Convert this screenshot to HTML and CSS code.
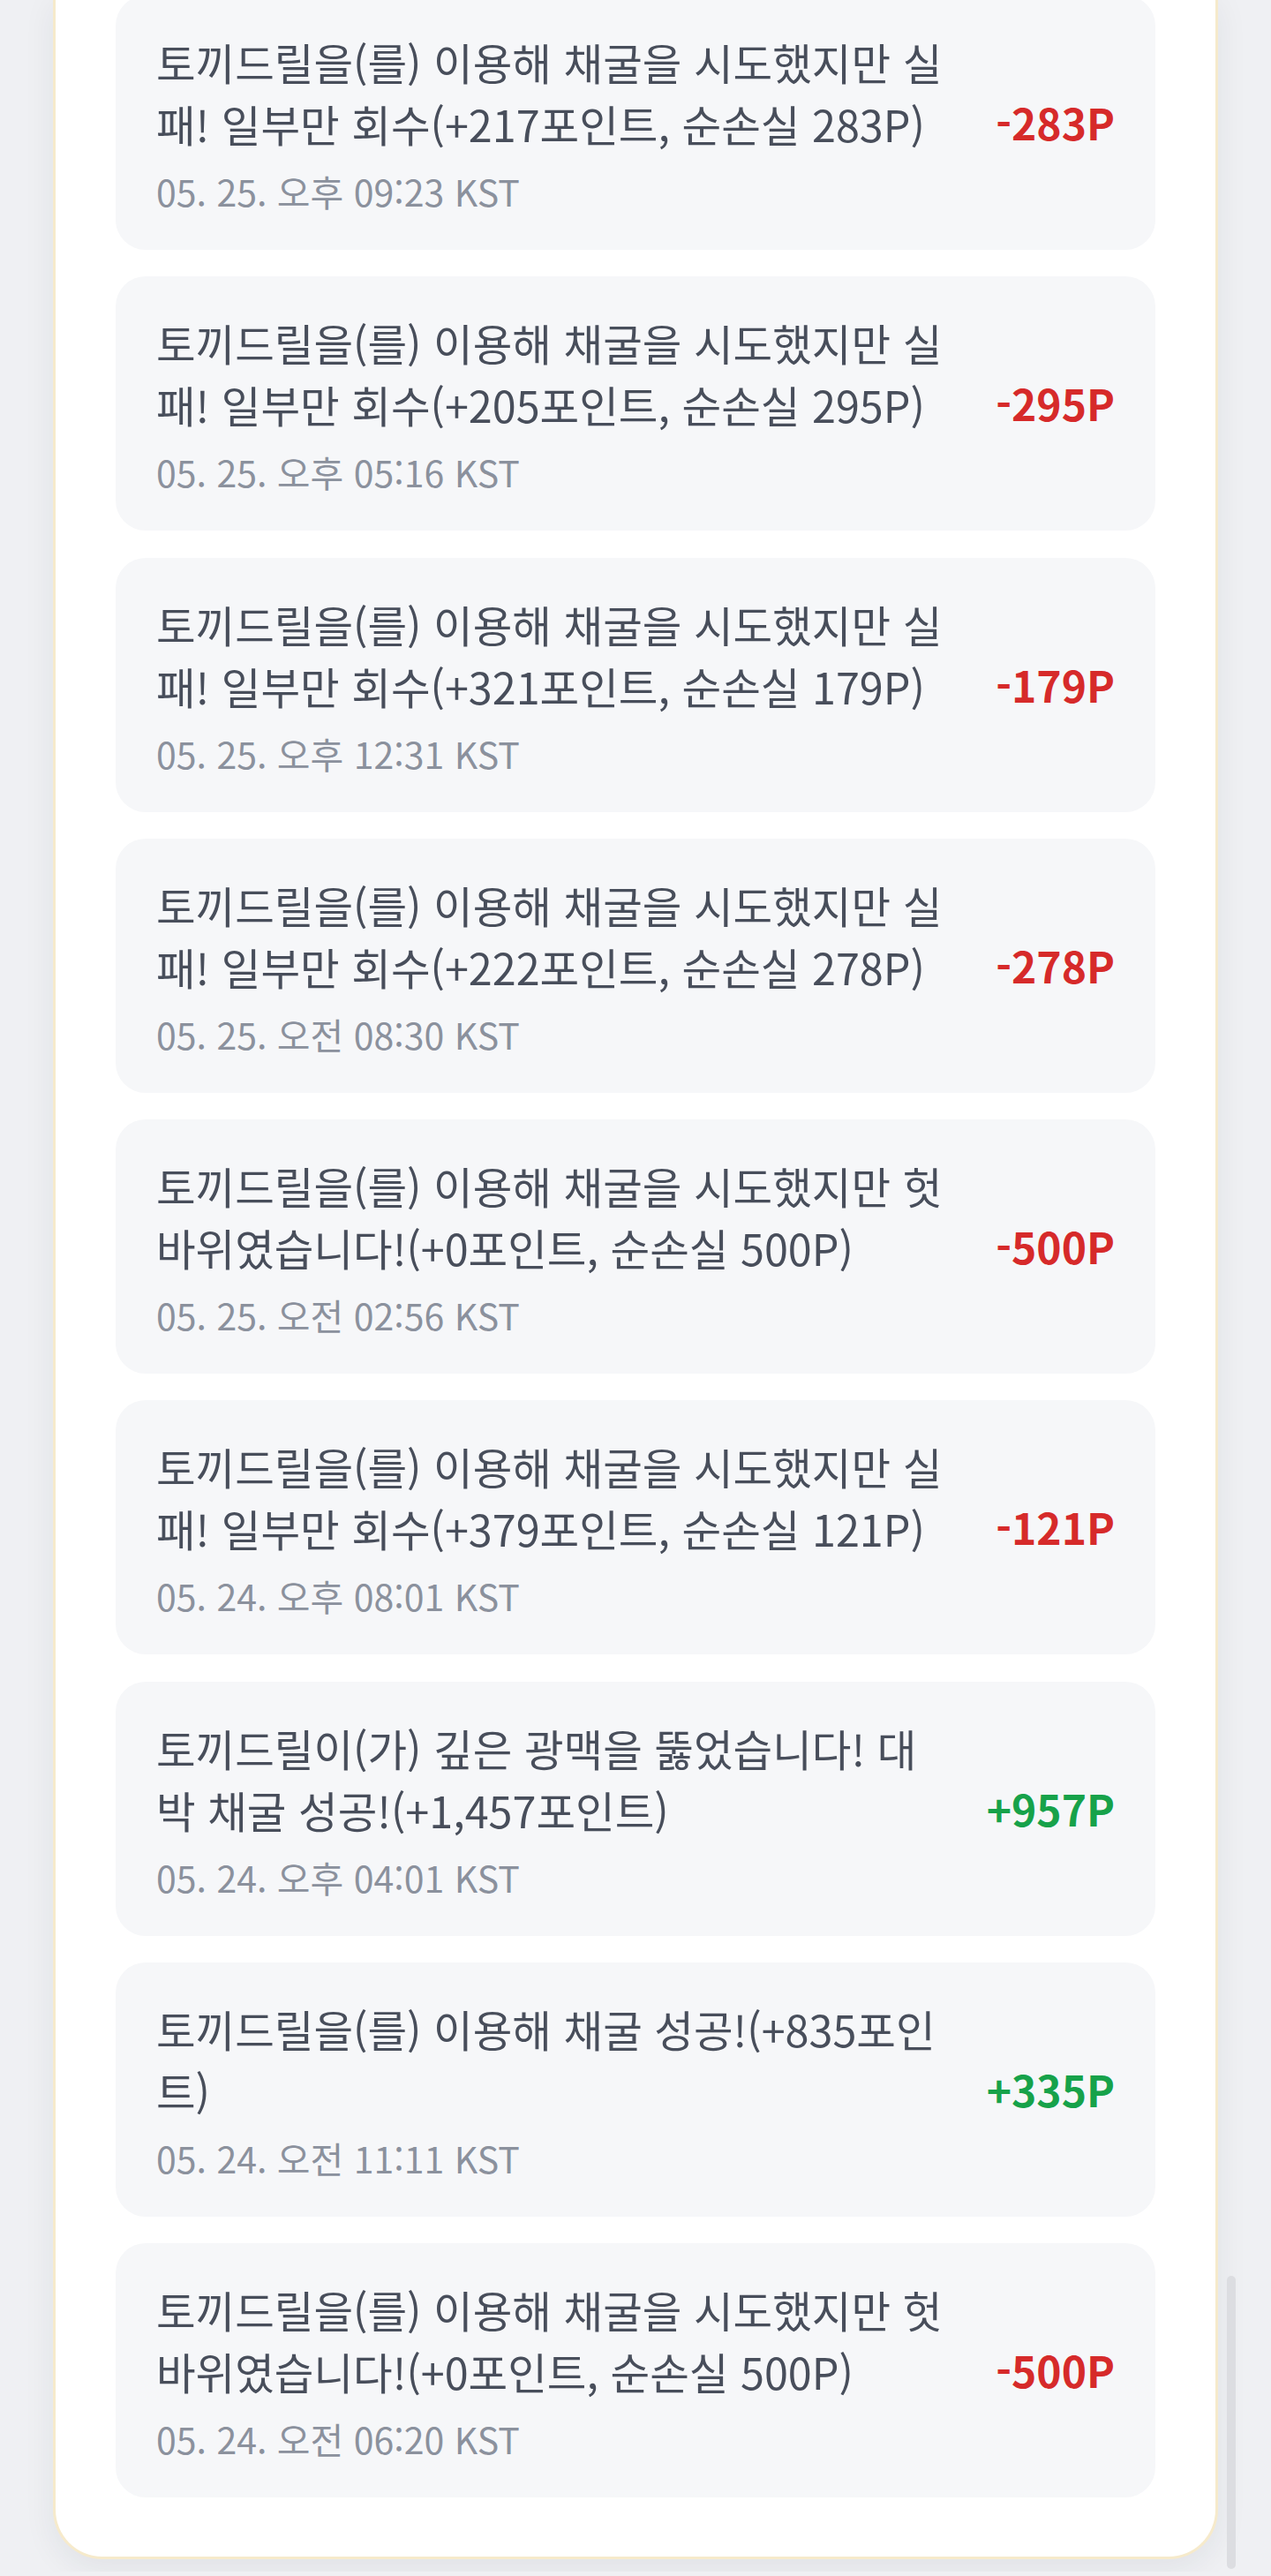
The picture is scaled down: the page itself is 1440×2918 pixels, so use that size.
FILE: index.html
```html
<!DOCTYPE html>
<html lang="ko">
<head>
<meta charset="utf-8">
<title>포인트 내역</title>
<link rel="stylesheet" href="styles.css">
</head>
<body>
<main class="page">
  <section class="panel">
    <ul class="history">
      <li class="entry">
        <div class="entry-body">
          <p class="entry-text">토끼드릴을(를) 이용해 채굴을 시도했지만 실패! 일부만 회수(+217포인트, 순손실 283P)</p>
          <p class="entry-date">05. 25. 오후 09:23 KST</p>
        </div>
        <span class="amount minus">-283P</span>
      </li>
      <li class="entry">
        <div class="entry-body">
          <p class="entry-text">토끼드릴을(를) 이용해 채굴을 시도했지만 실패! 일부만 회수(+205포인트, 순손실 295P)</p>
          <p class="entry-date">05. 25. 오후 05:16 KST</p>
        </div>
        <span class="amount minus">-295P</span>
      </li>
      <li class="entry">
        <div class="entry-body">
          <p class="entry-text">토끼드릴을(를) 이용해 채굴을 시도했지만 실패! 일부만 회수(+321포인트, 순손실 179P)</p>
          <p class="entry-date">05. 25. 오후 12:31 KST</p>
        </div>
        <span class="amount minus">-179P</span>
      </li>
      <li class="entry">
        <div class="entry-body">
          <p class="entry-text">토끼드릴을(를) 이용해 채굴을 시도했지만 실패! 일부만 회수(+222포인트, 순손실 278P)</p>
          <p class="entry-date">05. 25. 오전 08:30 KST</p>
        </div>
        <span class="amount minus">-278P</span>
      </li>
      <li class="entry">
        <div class="entry-body">
          <p class="entry-text">토끼드릴을(를) 이용해 채굴을 시도했지만 헛바위였습니다!(+0포인트, 순손실 500P)</p>
          <p class="entry-date">05. 25. 오전 02:56 KST</p>
        </div>
        <span class="amount minus">-500P</span>
      </li>
      <li class="entry">
        <div class="entry-body">
          <p class="entry-text">토끼드릴을(를) 이용해 채굴을 시도했지만 실패! 일부만 회수(+379포인트, 순손실 121P)</p>
          <p class="entry-date">05. 24. 오후 08:01 KST</p>
        </div>
        <span class="amount minus">-121P</span>
      </li>
      <li class="entry">
        <div class="entry-body">
          <p class="entry-text">토끼드릴이(가) 깊은 광맥을 뚫었습니다! 대박 채굴 성공!(+1,457포인트)</p>
          <p class="entry-date">05. 24. 오후 04:01 KST</p>
        </div>
        <span class="amount plus">+957P</span>
      </li>
      <li class="entry">
        <div class="entry-body">
          <p class="entry-text">토끼드릴을(를) 이용해 채굴 성공!(+835포인트)</p>
          <p class="entry-date">05. 24. 오전 11:11 KST</p>
        </div>
        <span class="amount plus">+335P</span>
      </li>
      <li class="entry">
        <div class="entry-body">
          <p class="entry-text">토끼드릴을(를) 이용해 채굴을 시도했지만 헛바위였습니다!(+0포인트, 순손실 500P)</p>
          <p class="entry-date">05. 24. 오전 06:20 KST</p>
        </div>
        <span class="amount minus">-500P</span>
      </li>
    </ul>
  </section>
  <div class="scroll-thumb" aria-hidden="true"></div>
</main>
</body>
</html>
```

FILE: styles.css
```css
html, body {
  margin: 0;
  padding: 0;
  overflow: hidden;
}

body {
  background: #eff0f3;
  font-family: "Noto Sans CJK KR", "Noto Sans", sans-serif;
  color: #4b5563;
}

.page {
  position: relative;
  height: 2918px;
}

.panel {
  box-sizing: border-box;
  width: 1320px;
  margin: -5px auto 0;
  padding: 0 68px 67px;
  background: #ffffff;
  border: 3px solid #f6eacb;
  border-top: none;
  border-radius: 0 0 56px 56px;
  box-shadow: 0 10px 36px rgba(30, 40, 60, 0.07);
}

.history {
  list-style: none;
  margin: 0;
  padding: 0;
  display: flex;
  flex-direction: column;
  gap: 30.3px;
}

.entry {
  display: flex;
  align-items: center;
  gap: 44px;
  height: 288px;
  box-sizing: border-box;
  padding: 40px 46px 42px 46px;
  background: #f6f7f9;
  border-radius: 34px;
}

.entry-body {
  flex: 1 1 auto;
  min-width: 0;
}

.entry-text {
  margin: 0;
  font-size: 48.5px;
  line-height: 70px;
  color: #484e5b;
}

.entry-date {
  margin: 16px 0 0;
  font-size: 41px;
  line-height: 50px;
  color: #8b919d;
}

.amount {
  flex: 0 0 auto;
  font-size: 48px;
  font-weight: 700;
  line-height: 1;
}

.amount.minus {
  color: #d62a2a;
}

.amount.plus {
  color: #17a24a;
}

.scroll-thumb {
  position: absolute;
  left: 1390px;
  top: 2583px;
  width: 10px;
  height: 332px;
  border-radius: 5px;
  background: #dcdde1;
}
```
